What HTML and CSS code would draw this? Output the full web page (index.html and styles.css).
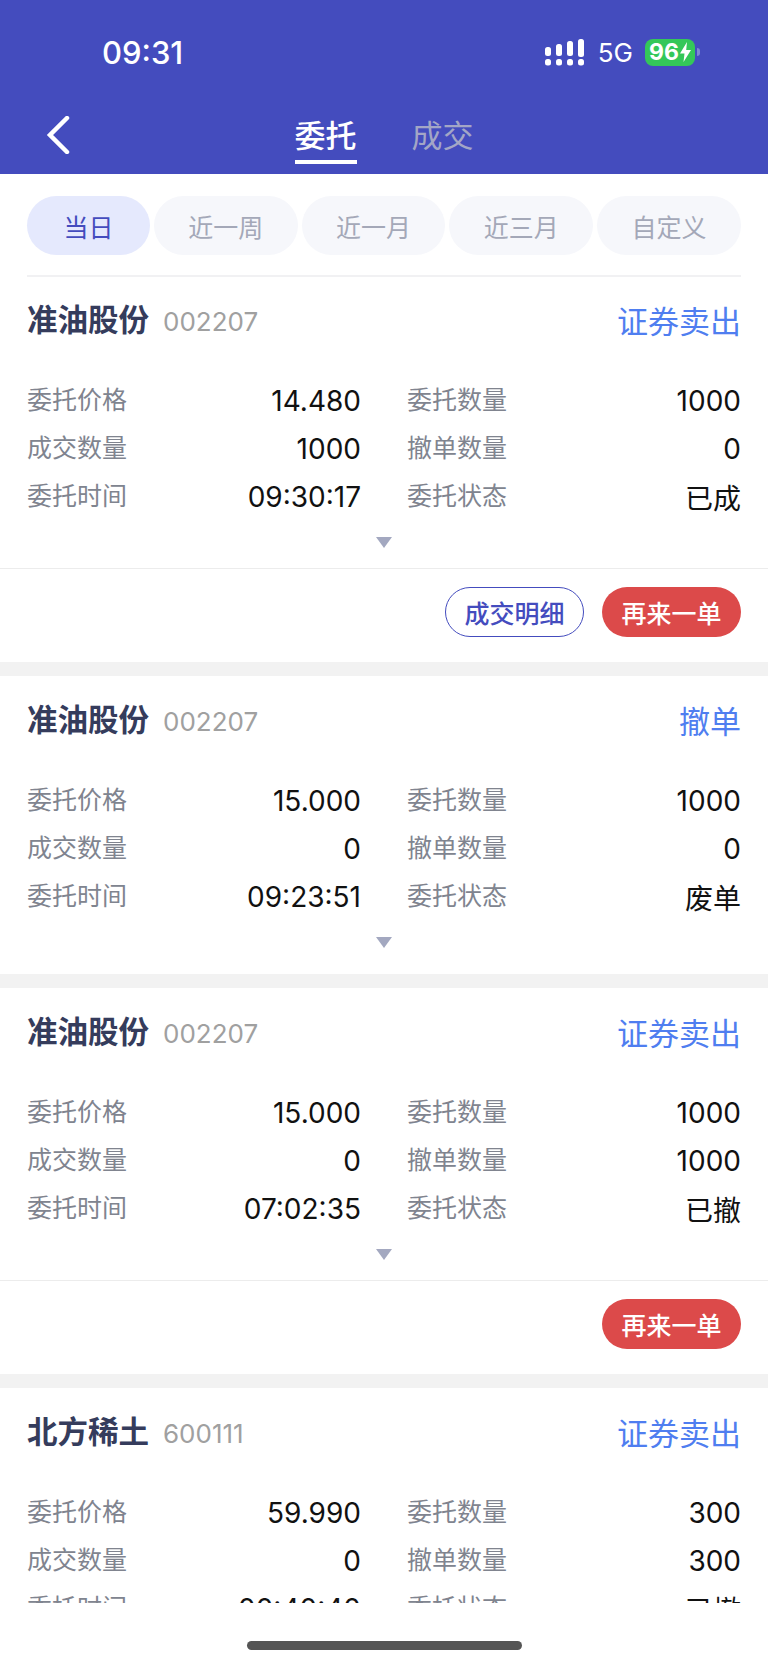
FILE: index.html
```html
<!DOCTYPE html>
<html lang="zh-CN">

<head>
    <meta charset="UTF-8">
    <meta name="viewport" content="width=device-width, initial-scale=1.0">
    <title>委托</title>
    <link rel="stylesheet" href="styles.css">
</head>

<body>
    <div class="topbar">
        <div class="status">
            <span class="clock">09:31</span>
            <div class="status-right">
                <svg class="signal" width="40" height="27" viewBox="0 0 40 27" fill="#fff">
                    <rect x="0" y="8" width="6" height="9" rx="2.5"/>
                    <rect x="11" y="5" width="6" height="12" rx="2.5"/>
                    <rect x="22" y="2" width="6" height="15" rx="2.5"/>
                    <rect x="33" y="0" width="6" height="18" rx="2.5"/>
                    <rect x="0" y="20" width="6" height="6.500" rx="2.500"/>
                    <rect x="11" y="20" width="6" height="6.500" rx="2.500"/>
                    <rect x="22" y="20" width="6" height="6.500" rx="2.500"/>
                    <rect x="33" y="20" width="6" height="6.500" rx="2.500"/>
                </svg>
                <span class="net">5G</span>
                <div class="battery">
                    <span>96</span>
                    <svg width="11" height="20" viewBox="0 0 11 20" fill="#fff"><path d="M7 0 L0 11.500 H4.500 L3.500 20 L11 8 H6.200 Z"/></svg>
                </div>
                <div class="battery-nub"></div>
            </div>
        </div>
        <div class="nav">
            <svg class="back" width="24" height="38" viewBox="0 0 24 38" fill="none" stroke="#fff" stroke-width="4.500" stroke-linecap="round"><path d="M21 2 L4 19 L21 36"/></svg>
            <div class="tabs">
                <span class="tab active">委托</span>
                <span class="tab">成交</span>
            </div>
        </div>
    </div>

    <div class="filters">
        <span class="pill first on">当日</span>
        <span class="pill">近一周</span>
        <span class="pill">近一月</span>
        <span class="pill">近三月</span>
        <span class="pill">自定义</span>
    </div>

    <div class="list">
        <div class="card">
            <div class="card-head">
                <div class="stock"><span class="name">准油股份</span><span class="code">002207</span></div>
                <span class="action">证券卖出</span>
            </div>
            <div class="rows">
                <div class="row"><span class="lbl">委托价格</span><span class="val">14.480</span></div>
                <div class="row"><span class="lbl">委托数量</span><span class="val">1000</span></div>
                <div class="row"><span class="lbl">成交数量</span><span class="val">1000</span></div>
                <div class="row"><span class="lbl">撤单数量</span><span class="val">0</span></div>
                <div class="row"><span class="lbl">委托时间</span><span class="val">09:30:17</span></div>
                <div class="row"><span class="lbl">委托状态</span><span class="val">已成</span></div>
            </div>
            <div class="more"><i class="arrow"></i></div>
            <div class="card-foot">
                <span class="btn outline">成交明细</span>
                <span class="btn red">再来一单</span>
            </div>
        </div>

        <div class="card">
            <div class="card-head">
                <div class="stock"><span class="name">准油股份</span><span class="code">002207</span></div>
                <span class="action">撤单</span>
            </div>
            <div class="rows">
                <div class="row"><span class="lbl">委托价格</span><span class="val">15.000</span></div>
                <div class="row"><span class="lbl">委托数量</span><span class="val">1000</span></div>
                <div class="row"><span class="lbl">成交数量</span><span class="val">0</span></div>
                <div class="row"><span class="lbl">撤单数量</span><span class="val">0</span></div>
                <div class="row"><span class="lbl">委托时间</span><span class="val">09:23:51</span></div>
                <div class="row"><span class="lbl">委托状态</span><span class="val">废单</span></div>
            </div>
            <div class="more tall"><i class="arrow"></i></div>
        </div>

        <div class="card">
            <div class="card-head">
                <div class="stock"><span class="name">准油股份</span><span class="code">002207</span></div>
                <span class="action">证券卖出</span>
            </div>
            <div class="rows">
                <div class="row"><span class="lbl">委托价格</span><span class="val">15.000</span></div>
                <div class="row"><span class="lbl">委托数量</span><span class="val">1000</span></div>
                <div class="row"><span class="lbl">成交数量</span><span class="val">0</span></div>
                <div class="row"><span class="lbl">撤单数量</span><span class="val">1000</span></div>
                <div class="row"><span class="lbl">委托时间</span><span class="val">07:02:35</span></div>
                <div class="row"><span class="lbl">委托状态</span><span class="val">已撤</span></div>
            </div>
            <div class="more"><i class="arrow"></i></div>
            <div class="card-foot">
                <span class="btn red">再来一单</span>
            </div>
        </div>

        <div class="card">
            <div class="card-head">
                <div class="stock"><span class="name">北方稀土</span><span class="code">600111</span></div>
                <span class="action">证券卖出</span>
            </div>
            <div class="rows">
                <div class="row"><span class="lbl">委托价格</span><span class="val">59.990</span></div>
                <div class="row"><span class="lbl">委托数量</span><span class="val">300</span></div>
                <div class="row"><span class="lbl">成交数量</span><span class="val">0</span></div>
                <div class="row"><span class="lbl">撤单数量</span><span class="val">300</span></div>
                <div class="row"><span class="lbl">委托时间</span><span class="val">00:40:40</span></div>
                <div class="row"><span class="lbl">委托状态</span><span class="val">已撤</span></div>
            </div>
        </div>
    </div>

    <div class="home-area"><div class="home-bar"></div></div>
</body>

</html>
```

FILE: styles.css
```css
* {
    margin: 0;
    padding: 0;
    box-sizing: border-box;
}

body {
    width: 768px;
    height: 1665px;
    overflow: hidden;
    display: flex;
    flex-direction: column;
    background-color: white;
    font-family: Inter, "Noto Sans CJK SC", sans-serif;
}

.topbar {
    height: 174px;
    flex: none;
    background-color: #444cbe;
    color: white;
}

.status {
    height: 104px;
    display: flex;
    justify-content: space-between;
    align-items: center;
    padding: 0 68px 0 102px;
}

.clock {
    font-size: 31px;
    font-weight: 500;
}

.status-right {
    display: flex;
    align-items: center;
}

.signal {
    margin-right: 13px;
}

.net {
    font-size: 26px;
    margin-right: 12px;
}

.battery {
    width: 50px;
    height: 27px;
    border-radius: 8px;
    background-color: #34c759;
    display: flex;
    align-items: center;
    justify-content: center;
    gap: 1px;
    font-size: 23px;
    font-weight: 700;
}

.battery-nub {
    width: 3px;
    height: 8px;
    margin-left: 2px;
    border-radius: 0 3px 3px 0;
    background-color: #7f86d4;
}

.nav {
    position: relative;
    height: 70px;
}

.back {
    position: absolute;
    left: 46px;
    top: 12px;
}

.tabs {
    display: flex;
    justify-content: center;
    gap: 55px;
    padding-top: 9px;
}

.tab {
    font-size: 31px;
    line-height: 46px;
    color: #a3a6c6;
    height: 51px;
}

.tab.active {
    color: white;
    font-weight: 500;
    border-bottom: 4px solid white;
}

.filters {
    flex: none;
    margin: 22px 27px -1px;
    height: 81px;
    display: flex;
    gap: 4px;
    border-bottom: 2px solid #f1f1f3;
}

.pill {
    width: 144px;
    height: 59px;
    border-radius: 30px;
    background-color: #f6f7fb;
    color: #a4a8b8;
    font-size: 25px;
    display: flex;
    align-items: center;
    justify-content: center;
}

.pill.first {
    width: 123px;
}

.pill.on {
    background-color: #e5e9fd;
    color: #444cbe;
}

.list {
    height: 1327px;
    flex: none;
    overflow: hidden;
}

.card {
    border-bottom: 14px solid #f2f2f2;
}

.card-head {
    height: 86px;
    padding: 0 27px;
    display: flex;
    justify-content: space-between;
    align-items: center;
}

.stock {
    margin-bottom: 2px;
}

.name {
    font-size: 30.5px;
    font-weight: 700;
    color: #353c5c;
}

.code {
    font-size: 26px;
    color: #a0a0a0;
    margin-left: 14px;
}

.action {
    font-size: 31px;
    color: #4f7ef0;
}

.rows {
    display: grid;
    grid-template-columns: 334px 334px;
    column-gap: 46px;
    padding: 12px 27px 0;
}

.row {
    height: 48px;
    display: flex;
    justify-content: space-between;
    align-items: center;
}

.lbl {
    font-size: 25px;
    color: #80848f;
}

.val {
    font-size: 28px;
    color: #111;
    padding-top: 6px;
}

.more {
    height: 50px;
    padding-top: 19px;
    display: flex;
    justify-content: center;
}

.more.tall {
    height: 56px;
}

.arrow {
    width: 0;
    height: 0;
    border-left: 8px solid transparent;
    border-right: 8px solid transparent;
    border-top: 11px solid #a3a8c0;
}

.card-foot {
    height: 94px;
    border-top: 1px solid #ececec;
    padding: 18px 27px 0;
    display: flex;
    justify-content: flex-end;
    gap: 18px;
}

.btn {
    width: 139px;
    height: 50px;
    border-radius: 25px;
    font-size: 25px;
    display: flex;
    align-items: center;
    justify-content: center;
}

.btn.outline {
    border: 1px solid #444cbe;
    color: #444cbe;
    font-weight: 500;
}

.btn.red {
    background-color: #dc4a4a;
    color: white;
    font-weight: 500;
}

.home-area {
    flex: 1;
    position: relative;
    background-color: white;
}

.home-bar {
    position: absolute;
    left: 247px;
    bottom: 15px;
    width: 275px;
    height: 9px;
    border-radius: 5px;
    background-color: #555;
}
```
